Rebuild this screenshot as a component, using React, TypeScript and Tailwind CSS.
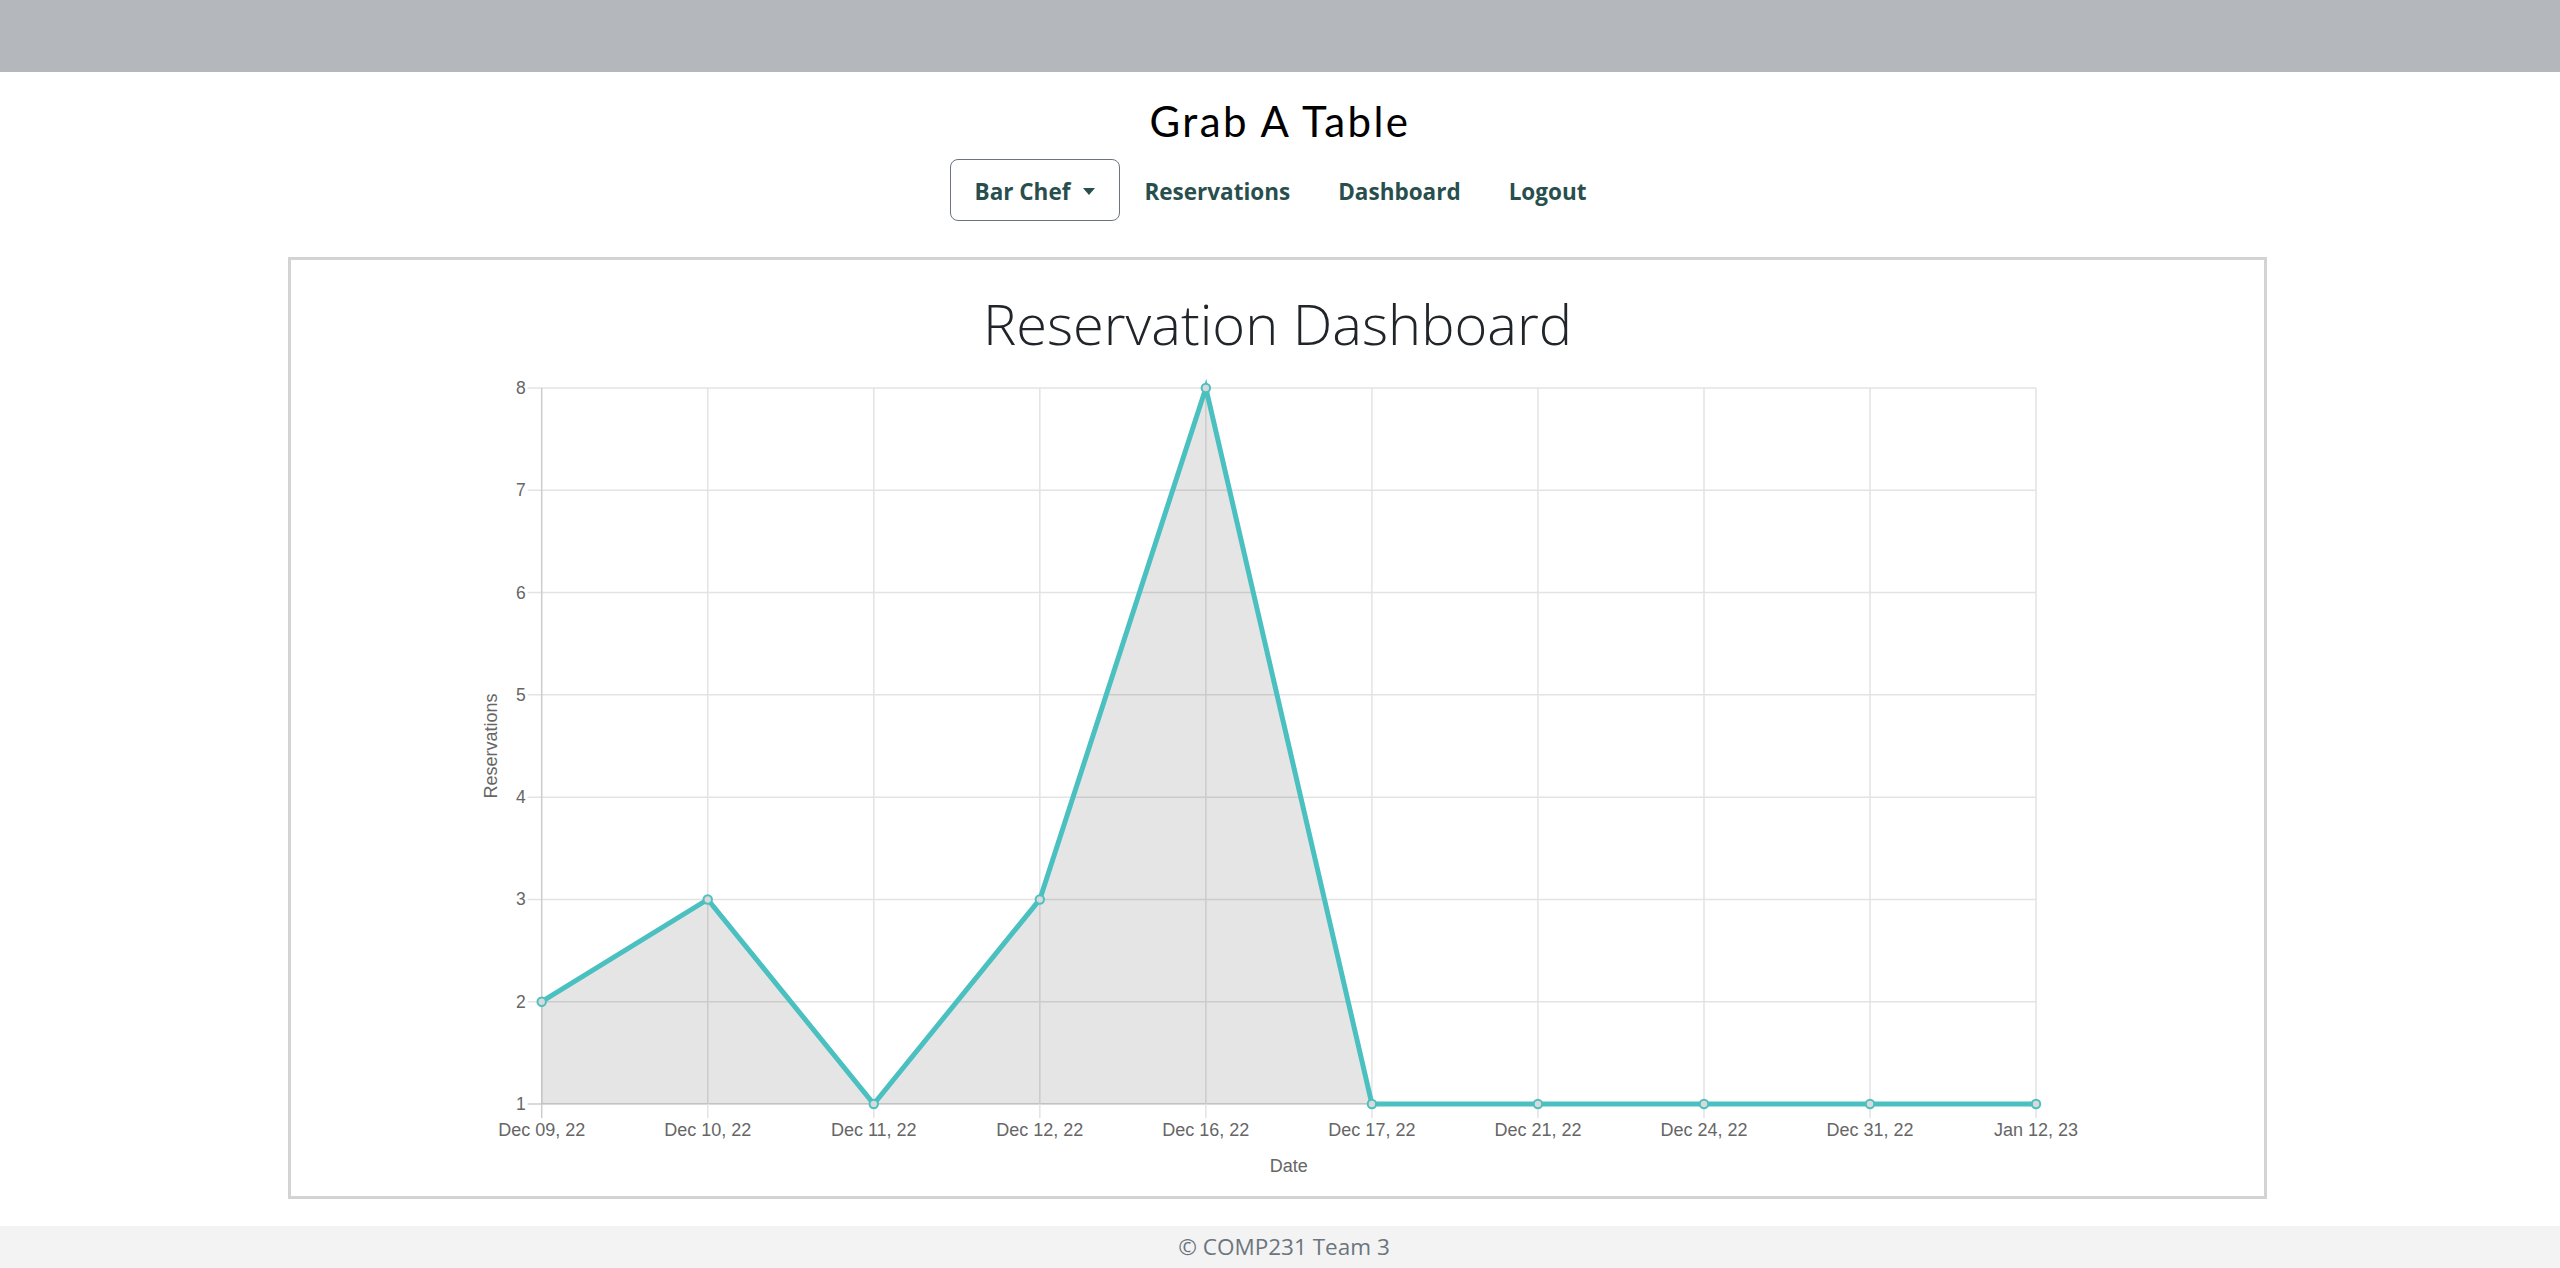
import React from "react";

const OX = 291;
const OY = 358;
const left = 541.7 - OX;
const step = 166.04;
const top = 388 - OY;
const unit = 102.29;
const yOf = (v: number) => top + (8 - v) * unit;
const xOf = (i: number) => left + i * step;

const labels = [
  "Dec 09, 22",
  "Dec 10, 22",
  "Dec 11, 22",
  "Dec 12, 22",
  "Dec 16, 22",
  "Dec 17, 22",
  "Dec 21, 22",
  "Dec 24, 22",
  "Dec 31, 22",
  "Jan 12, 23",
];
const data = [2, 3, 1, 3, 8, 1, 1, 1, 1, 1];

function Chart() {
  const right = xOf(9);
  const bottom = yOf(1);
  const linePts = data.map((v, i) => `${xOf(i)},${yOf(v)}`).join(" ");
  const areaPts = `${xOf(0)},${bottom} ${linePts} ${xOf(9)},${bottom}`;
  const font = "'Liberation Sans', Arial, sans-serif";
  return (
    <svg width={1973} height={838} className="block">
      {[1, 2, 3, 4, 5, 6, 7, 8].map((v) => (
        <line
          key={"h" + v}
          x1={left - 14}
          x2={right}
          y1={yOf(v)}
          y2={yOf(v)}
          stroke={v === 1 ? "#cccccc" : "#e3e3e3"}
          strokeWidth={1.5}
        />
      ))}
      {labels.map((_, i) => (
        <line
          key={"v" + i}
          x1={xOf(i)}
          x2={xOf(i)}
          y1={top}
          y2={bottom + 14}
          stroke={i === 0 ? "#cccccc" : "#e3e3e3"}
          strokeWidth={1.5}
        />
      ))}
      <polygon points={areaPts} fill="rgba(0,0,0,0.1)" />
      <polyline
        points={linePts}
        fill="none"
        stroke="#4bc0c0"
        strokeWidth={5}
        strokeLinejoin="miter"
      />
      {data.map((v, i) => (
        <circle
          key={"p" + i}
          cx={xOf(i)}
          cy={yOf(v)}
          r={4.2}
          fill="#d9d9d9"
          stroke="#4bc0c0"
          strokeWidth={2}
        />
      ))}
      {[1, 2, 3, 4, 5, 6, 7, 8].map((v) => (
        <text
          key={"yl" + v}
          x={left - 16}
          y={yOf(v) + 6}
          textAnchor="end"
          fontSize={17.5}
          fill="#666"
          fontFamily={font}
        >
          {v}
        </text>
      ))}
      {labels.map((l, i) => (
        <text
          key={"xl" + i}
          x={xOf(i)}
          y={1136 - OY}
          textAnchor="middle"
          fontSize={18}
          fill="#666"
          fontFamily={font}
        >
          {l}
        </text>
      ))}
      <text
        x={(left + right) / 2}
        y={1172 - OY}
        textAnchor="middle"
        fontSize={18}
        fill="#666"
        fontFamily={font}
      >
        Date
      </text>
      <text
        transform={`translate(${497 - OX}, ${(top + bottom) / 2}) rotate(-90)`}
        textAnchor="middle"
        fontSize={18}
        fill="#666"
        fontFamily={font}
      >
        Reservations
      </text>
    </svg>
  );
}

export default function App() {
  return (
    <div className="min-h-screen flex flex-col bg-white">
      <div className="h-[72px] bg-[#b4b7bb]" />
      <div
        className="mt-[24px] text-center text-[42px] leading-[50px] tracking-[2.4px] text-black"
        style={{ fontFamily: "Lato, 'Open Sans', sans-serif" }}
      >
        Grab A Table
      </div>
      <nav
        className="mt-[13px] flex justify-center items-center text-[22.5px] font-bold text-[#284f4d]"
        style={{ fontFamily: "'Open Sans', sans-serif" }}
      >
        <button className="h-[62px] px-[24px] pt-[3px] flex items-center gap-[13px] border border-[#6c757d] rounded-[8px] bg-white font-bold text-[#284f4d]">
          <span>Bar Chef</span>
          <span className="w-0 h-0 border-l-[6px] border-r-[6px] border-t-[7px] border-l-transparent border-r-transparent border-t-[#284f4d]" />
        </button>
        <a className="px-[24px] pt-[3px]">Reservations</a>
        <a className="px-[24px] pt-[3px]">Dashboard</a>
        <a className="px-[24px] pt-[3px]">Logout</a>
      </nav>
      <div className="mt-[36px] ml-[288px] w-[1979px] h-[942px] border-[3px] border-[#d3d3d3] flex flex-col">
        <div
          className="pt-[29px] h-[98px] text-center text-[56px] leading-[68px] font-light text-[#212529]"
          style={{ fontFamily: "'Open Sans', sans-serif" }}
        >
          Reservation Dashboard
        </div>
        <Chart />
      </div>
      <footer
        className="mt-auto h-[42px] pl-[8px] bg-[#f3f3f3] flex items-center justify-center text-[22.5px] text-[#6c757d]"
        style={{ fontFamily: "'Open Sans', sans-serif" }}
      >
        © COMP231 Team 3
      </footer>
    </div>
  );
}
